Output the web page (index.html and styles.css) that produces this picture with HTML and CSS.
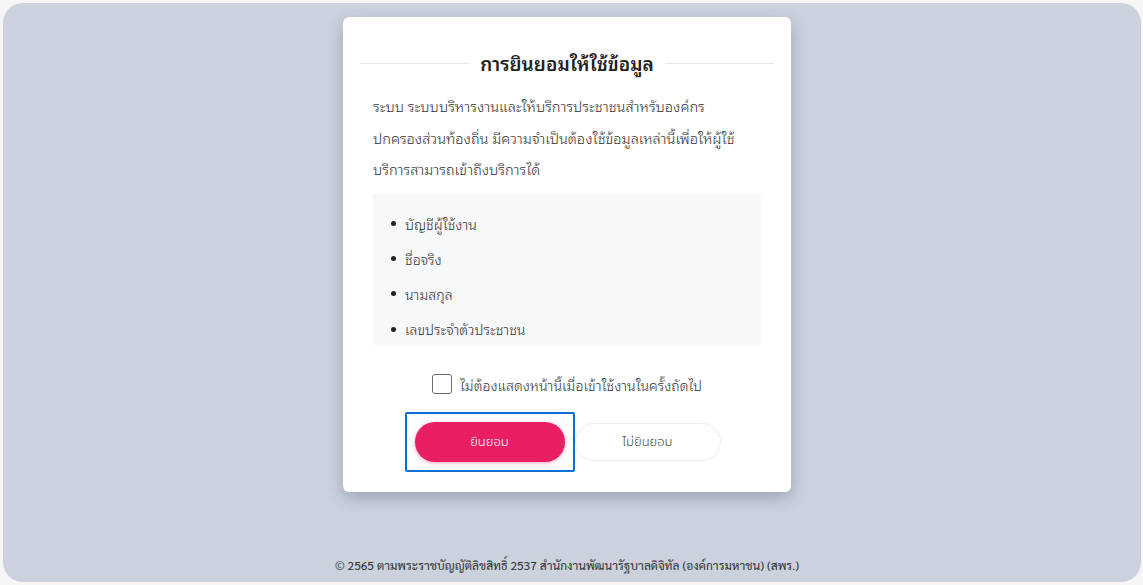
FILE: index.html
```html
<!DOCTYPE html>
<html lang="th">
<head>
<meta charset="utf-8">
<title>การยินยอมให้ใช้ข้อมูล</title>
<link rel="stylesheet" href="styles.css">
</head>
<body>
<div class="panel">
  <section class="consent-card">
    <h1 class="consent-title"><span>การยินยอมให้ใช้ข้อมูล</span></h1>
    <p class="consent-text">ระบบ ระบบบริหารงานและให้บริการประชาชนสำหรับองค์กร<br>ปกครองส่วนท้องถิ่น มีความจำเป็นต้องใช้ข้อมูลเหล่านี้เพื่อให้ผู้ใช้<br>บริการสามารถเข้าถึงบริการได้</p>
    <ul class="scope-list">
      <li>บัญชีผู้ใช้งาน</li>
      <li>ชื่อจริง</li>
      <li>นามสกุล</li>
      <li>เลขประจำตัวประชาชน</li>
    </ul>
    <label class="remember">
      <input type="checkbox" class="remember-box">
      <span>ไม่ต้องแสดงหน้านี้เมื่อเข้าใช้งานในครั้งถัดไป</span>
    </label>
    <div class="actions">
      <div class="focus-ring"><button class="btn btn-accept">ยินยอม</button></div>
      <button class="btn btn-decline">ไม่ยินยอม</button>
    </div>
  </section>
  <footer class="copyright">© 2565 ตามพระราชบัญญัติลิขสิทธิ์ 2537 สำนักงานพัฒนารัฐบาลดิจิทัล (องค์การมหาชน) (สพร.)</footer>
</div>
</body>
</html>
```
FILE: styles.css
```css
html, body {
  margin: 0;
  height: 100%;
}
body {
  background: #f6f6f7;
  font-family: "Noto Sans Thai Looped", Sarabun, sans-serif;
  font-weight: 300;
  color: #333;
  padding: 3px 2px 3px 3px;
  box-sizing: border-box;
}
.panel {
  height: 579px;
  box-sizing: border-box;
  padding-right: 10px;
  border-radius: 20px;
  background: #cbd2de;
  display: flex;
  flex-direction: column;
  align-items: center;
}
.consent-card {
  margin-top: 14px;
  width: 448px;
  height: 475px;
  box-sizing: border-box;
  background: #fff;
  border-radius: 6px;
  box-shadow: 0 6px 16px rgba(40, 50, 70, 0.28);
  padding: 30px 17px 0;
  display: flex;
  flex-direction: column;
}
.consent-title {
  margin: 0;
  display: flex;
  align-items: center;
  gap: 11px;
  font-size: 19px;
  font-weight: 600;
  color: #222;
  line-height: 32px;
}
.consent-title::before,
.consent-title::after {
  content: "";
  flex: 1;
  height: 1px;
  background: #e4e6ea;
}
.consent-text {
  margin: 11px 13px 0;
  font-size: 14.6px;
  line-height: 31.5px;
  color: #333;
}
.scope-list {
  margin: 9px 13px 0;
  height: 151px;
  overflow: hidden;
  box-sizing: border-box;
  padding: 12px 0 0 18px;
  list-style: none;
  background: #f7f8fa;
  font-size: 14.2px;
  line-height: 35.3px;
  color: #333;
}
.scope-list li {
  display: flex;
  align-items: center;
  gap: 9px;
}
.scope-list li::before {
  content: "";
  width: 5px;
  height: 5px;
  border-radius: 50%;
  background: #222;
}
.remember {
  margin-top: 28px;
  align-self: center;
  display: flex;
  align-items: center;
  gap: 8px;
  font-size: 14.2px;
  color: #333;
}
.remember-box {
  appearance: none;
  margin: 0;
  width: 20px;
  height: 20px;
  border: 1.5px solid #6b6b6b;
  border-radius: 3px;
  background: #fff;
}
.actions {
  margin-top: 16px;
  display: flex;
  justify-content: center;
  align-items: center;
  margin-right: 9px;
}
.focus-ring {
  border: 2px solid #0b6fd6;
  border-radius: 2px;
  padding: 8px;
}
.btn {
  font-family: "Noto Sans Thai", "Noto Sans", sans-serif;
  font-weight: 300;
  font-size: 13px;
  height: 40px;
  width: 150px;
  border-radius: 20px;
  cursor: pointer;
}
.btn-accept {
  border: none;
  background: #e91e63;
  color: #fff;
  box-shadow: 0 1px 4px rgba(233, 30, 99, 0.4);
}
.btn-decline {
  width: 146px;
  height: 38px;
  border: 1px solid #eceef1;
  background: #fff;
  color: #444;
}
.copyright {
  margin-top: auto;
  margin-bottom: 9px;
  font-family: Sarabun, sans-serif;
  font-size: 12px;
  font-weight: 400;
  color: #333;
}
```
